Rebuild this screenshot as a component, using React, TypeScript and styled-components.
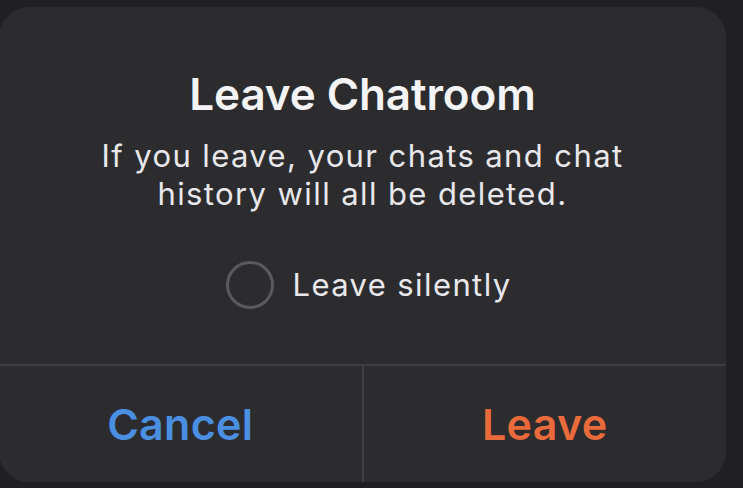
import styled, { createGlobalStyle } from "styled-components";

const GlobalStyle = createGlobalStyle`
  html, body {
    margin: 0;
    padding: 0;
    background: #1f1f21;
  }
  body {
    font-family: Inter, "Noto Sans", "Liberation Sans", sans-serif;
    -webkit-font-smoothing: antialiased;
  }
`;

const Page = styled.div`
  width: 743px;
  height: 488px;
  overflow: hidden;
  background: #202022;
  padding-top: 7px;
  box-sizing: border-box;
`;

const Dialog = styled.div`
  width: 727px;
  height: 475px;
  margin-left: -1px;
  background: #2c2c2e;
  border-radius: 30px;
  display: flex;
  flex-direction: column;
  overflow: hidden;
`;

const Body = styled.div`
  flex: 1;
  display: flex;
  flex-direction: column;
  align-items: center;
  padding-top: 61px;
`;

const Title = styled.h1`
  margin: 0;
  font-size: 44px;
  line-height: 52px;
  font-weight: 600;
  color: #f4f4f6;
  letter-spacing: -0.1px;
`;

const Message = styled.p`
  margin: 17px 0 0;
  font-size: 31px;
  line-height: 38px;
  font-weight: 400;
  color: #e8e8ec;
  text-align: center;
  letter-spacing: 1.4px;
`;

const RadioRow = styled.label`
  margin: 48px 0 0 13px;
  display: flex;
  align-items: center;
  gap: 18px;
  font-size: 31px;
  line-height: 38px;
  letter-spacing: 1.4px;
  color: #e8e8ec;
  cursor: pointer;
`;

const RadioCircle = styled.span`
  width: 48px;
  height: 48px;
  box-sizing: border-box;
  border: 3px solid #5a5a5c;
  border-radius: 50%;
`;

const Footer = styled.div`
  height: 118px;
  border-top: 2px solid #3e3e40;
  box-sizing: border-box;
  display: flex;
`;

const ActionButton = styled.button<{ $tone: "cancel" | "danger" }>`
  flex: 1;
  background: none;
  border: none;
  padding: 0;
  font-family: inherit;
  font-size: 43px;
  font-weight: 600;
  letter-spacing: 0.3px;
  color: ${(p) => (p.$tone === "cancel" ? "#4a8fe1" : "#e96a3b")};
  cursor: pointer;
  & + & {
    border-left: 2px solid #3e3e40;
  }
`;

export default function App() {
  return (
    <>
      <GlobalStyle />
      <Page>
        <Dialog>
          <Body>
            <Title>Leave Chatroom</Title>
            <Message>
              If you leave, your chats and chat
              <br />
              history will all be deleted.
            </Message>
            <RadioRow>
              <RadioCircle />
              Leave silently
            </RadioRow>
          </Body>
          <Footer>
            <ActionButton $tone="cancel">Cancel</ActionButton>
            <ActionButton $tone="danger">Leave</ActionButton>
          </Footer>
        </Dialog>
      </Page>
    </>
  );
}
